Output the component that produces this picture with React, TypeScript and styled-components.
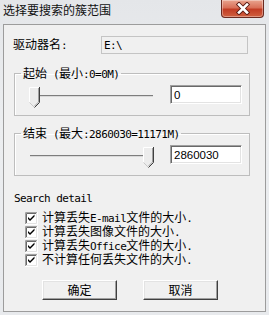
import React from "react";
import styled, { createGlobalStyle } from "styled-components";

const Global = createGlobalStyle`
  html, body { margin: 0; padding: 0; }
  body {
    width: 269px; height: 315px; overflow: hidden;
    font-family: "Noto Sans CJK SC", "Liberation Sans", sans-serif;
    font-size: 12px; color: #000;
  }
`;

const Window = styled.div`
  width: 269px; height: 315px; box-sizing: border-box;
  display: flex; flex-direction: column;
  padding: 0 3px 3px 3px;
  background: linear-gradient(to bottom, #e4e6e9 0%, #eceef0 40%, #e8eaed 100%);
`;

const TitleBar = styled.div`
  height: 24px; flex: none;
  display: flex; justify-content: space-between; align-items: flex-start;
`;

const Title = styled.div`
  margin-top: 3px; line-height: 14px; font-size: 12px; color: #111;
`;

const CloseBtn = styled.div`
  width: 43px; height: 18px; margin-right: 2px; box-sizing: border-box;
  border: 1px solid #6b2a20; border-top: none;
  border-radius: 0 0 4px 4px;
  background: linear-gradient(to bottom, #e9a48f 0%, #d97058 45%, #c23c24 55%, #d0603f 100%);
  box-shadow: inset 0 0 0 1px rgba(255,255,255,0.35);
  display: flex; align-items: center; justify-content: center;
`;

const Client = styled.div`
  flex: 1; box-sizing: border-box;
  border: 1px solid #9c9c9c;
  background: #f0f0f0;
  display: flex; flex-direction: column;
`;

const DriverRow = styled.div`
  display: flex; align-items: center;
  margin: 11px 0 0 9px; height: 18px;
`;

const DriverLabel = styled.div`
  width: 88px; line-height: 14px;
`;

const ReadOnlyEdit = styled.div`
  width: 147px; height: 18px; box-sizing: border-box;
  border: 1px solid #c4c4c4; background: #f0f0f0;
  padding-left: 2px; display: flex; align-items: center;
`;

const Half = styled.span`
  font-family: "DejaVu Sans Mono", "Liberation Mono", monospace;
  font-size: 11px; letter-spacing: -0.6px;
  white-space: pre;
`;

const Group = styled.fieldset<{ $top: number }>`
  margin: ${(p) => p.$top}px 0 0 10px;
  width: 236px; box-sizing: border-box;
  border: 1px solid #bdbdbd;
  box-shadow: inset 1px 1px 0 #fff;
  padding: 0 0 7px 0; min-inline-size: 0;
`;

const Legend = styled.legend`
  margin-left: 6px; padding: 0 2px;
  line-height: 14px; height: 14px;
`;

const SliderRow = styled.div`
  display: flex; align-items: flex-start;
  margin: 5px 0 0 14px;
`;

const Slider = styled.div`
  position: relative; width: 125px; height: 21px; margin-top: 2px;
`;

const Track = styled.div`
  position: absolute; left: 1px; right: 1px; top: 8px; height: 1px;
  background: #7d7d7d; border-bottom: 1px solid #d9d9d9;
`;

const ThumbWrap = styled.div`
  position: absolute; top: 0; width: 11px; height: 21px;
`;

const Edit = styled.div`
  width: 72px; height: 19px; box-sizing: border-box; margin-left: 16px;
  background: #fff;
  border-top: 1px solid #a0a0a0; border-left: 1px solid #a0a0a0;
  border-bottom: 1px solid #fff; border-right: 1px solid #fff;
  box-shadow: inset 1px 1px 0 #696969, inset -1px -1px 0 #e3e3e3;
  padding: 0 0 0 3px; display: flex; align-items: center;
  font-family: "Liberation Sans", sans-serif; font-size: 11.5px;
`;

const DetailTitle = styled.div`
  margin: 17px 0 0 10px; line-height: 12px;
  font-family: "DejaVu Sans Mono", "Liberation Mono", monospace;
  font-size: 11px; letter-spacing: -0.6px;
`;

const CheckList = styled.div`
  margin-top: 6px; display: flex; flex-direction: column;
`;

const CheckRow = styled.div`
  height: 14px; display: flex; align-items: center;
  padding-left: 21px; gap: 4px; line-height: 14px;
`;

const Buttons = styled.div`
  display: flex; gap: 26px; margin: 13px 0 0 38px;
`;

const Button = styled.div`
  width: 75px; height: 20px; box-sizing: border-box;
  background: #f0f0f0;
  border: 1px solid; border-color: #fff #404040 #404040 #fff;
  box-shadow: inset -1px -1px 0 #a0a0a0, inset 1px 1px 0 #e3e3e3;
  display: flex; align-items: center; justify-content: center;
  line-height: 14px;
`;

const Thumb = () => (
  <svg width="11" height="21" viewBox="0 0 11 21">
    <polygon points="0,0 11,0 11,15 5.5,21 0,15" fill="#ececec" />
    <path d="M0.5 15.5 V0.5 H10" stroke="#fff" fill="none" />
    <path d="M0.5 15.5 L5.5 20.5" stroke="#c8c8c8" fill="none" />
    <path d="M10.5 0 V15.5 L5.5 20.5" stroke="#404040" fill="none" />
    <path d="M9.5 1 V15 L5.5 19" stroke="#a0a0a0" fill="none" />
  </svg>
);

const CheckBox = () => (
  <svg width="13" height="13" viewBox="0 0 13 13" style={{ flex: "none" }}>
    <rect x="0" y="0" width="13" height="13" fill="#fff" />
    <path d="M0.5 12 V0.5 H12" stroke="#a0a0a0" fill="none" />
    <path d="M1.5 11 V1.5 H11" stroke="#696969" fill="none" />
    <path d="M0 12.5 H12.5 V0" stroke="#fff" fill="none" />
    <path d="M1 11.5 H11.5 V1" stroke="#e3e3e3" fill="none" />
    <path d="M3 5 L5 7 L9.5 2.5 V4.5 L5 9 L3 7 Z" fill="#000" />
  </svg>
);

const CloseIcon = () => (
  <svg width="16" height="13" viewBox="0 0 16 13">
    <path d="M4 2.5 L12 10.5 M12 2.5 L4 10.5" stroke="#5a1a12" strokeWidth="4.4" strokeLinecap="square" />
    <path d="M4 2.5 L12 10.5 M12 2.5 L4 10.5" stroke="#fff" strokeWidth="2.6" strokeLinecap="square" />
  </svg>
);

const SliderControl = ({ value, max }: { value: number; max: number }) => (
  <Slider>
    <Track />
    <ThumbWrap style={{ left: `${(value / max) * 114}px` }}>
      <Thumb />
    </ThumbWrap>
  </Slider>
);

const checks: React.ReactNode[] = [
  <>计算丢失<Half>E-mail</Half>文件的大小<Half>.</Half></>,
  <>计算丢失图像文件的大小<Half>.</Half></>,
  <>计算丢失<Half>Office</Half>文件的大小<Half>.</Half></>,
  <>不计算任何丢失文件的大小<Half>.</Half></>,
];

export default function App() {
  return (
    <Window>
      <Global />
      <TitleBar>
        <Title>选择要搜索的簇范围</Title>
        <CloseBtn><CloseIcon /></CloseBtn>
      </TitleBar>
      <Client>
        <DriverRow>
          <DriverLabel>驱动器名<Half>:</Half></DriverLabel>
          <ReadOnlyEdit><Half>E:\</Half></ReadOnlyEdit>
        </DriverRow>
        <Group $top={12}>
          <Legend>起始<Half> (</Half>最小<Half>:0=0M)</Half></Legend>
          <SliderRow>
            <SliderControl value={0} max={2860030} />
            <Edit>0</Edit>
          </SliderRow>
        </Group>
        <Group $top={10}>
          <Legend>结束<Half> (</Half>最大<Half>:2860030=11171M)</Half></Legend>
          <SliderRow>
            <SliderControl value={2860030} max={2860030} />
            <Edit>2860030</Edit>
          </SliderRow>
        </Group>
        <DetailTitle>Search detail</DetailTitle>
        <CheckList>
          {checks.map((c, i) => (
            <CheckRow key={i}>
              <CheckBox />
              <span>{c}</span>
            </CheckRow>
          ))}
        </CheckList>
        <Buttons>
          <Button>确定</Button>
          <Button>取消</Button>
        </Buttons>
      </Client>
    </Window>
  );
}
